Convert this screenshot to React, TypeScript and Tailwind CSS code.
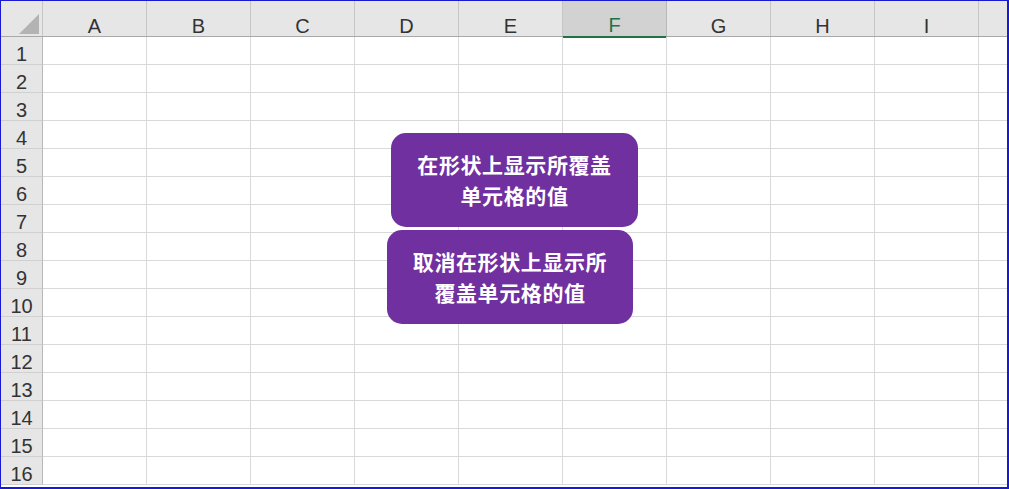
const columns = ["A", "B", "C", "D", "E", "F", "G", "H", "I", "J"];
const rows = Array.from({ length: 16 }, (_, i) => i + 1);

function Corner() {
  return (
    <div className="relative h-full w-[42px] shrink-0 border-r border-[#c6c6c6]">
      <svg className="absolute left-[18px] top-[13px]" width="20" height="20" viewBox="0 0 20 20">
        <polygon points="20,0 20,20 0,20" fill="#b3b3b3" />
      </svg>
    </div>
  );
}

function Shape({ className, lines }: { className: string; lines: string[] }) {
  return (
    <div
      className={`absolute flex flex-col items-center justify-center rounded-[15px] bg-[#7030a0] text-[21px] font-bold leading-[31px] tracking-[0.6px] text-white font-['Noto_Sans_CJK_SC',sans-serif] ${className}`}
    >
      {lines.map((line) => (
        <div key={line}>{line}</div>
      ))}
    </div>
  );
}

export default function App() {
  return (
    <div className="relative h-[489px] w-[1009px] overflow-hidden border-t border-l border-r-2 border-b-2 border-[#1a1ad0] bg-white font-['Liberation_Sans',sans-serif] text-[#333]">
      {/* column headers */}
      <div className="flex h-[36px] border-b border-[#a8a8a8] bg-[#e6e6e6]">
        <Corner />
        {columns.map((c) =>
          c === "F" ? (
            <div
              key={c}
              className="-mb-px flex h-[37px] w-[104px] shrink-0 items-end justify-center border-r border-b-2 border-r-[#b8b8b8] border-b-[#217346] bg-[#d2d2d2] pb-px text-[20px] leading-[20px] text-[#217346]"
            >
              {c}
            </div>
          ) : (
            <div
              key={c}
              className="flex h-full w-[104px] shrink-0 items-end justify-center border-r border-[#c6c6c6] text-[20px] leading-[20px]"
            >
              {/* J sits past the window edge, its letter is not visible */}
              {c === "J" ? "" : c}
            </div>
          )
        )}
      </div>

      {/* rows */}
      {rows.map((r) => (
        <div key={r} className="flex h-[28px]">
          <div className="flex w-[42px] shrink-0 items-end justify-center border-r border-b border-r-[#b8b8b8] border-b-[#d0d0d0] bg-[#e6e6e6] text-[20px] leading-[20px]">
            {r}
          </div>
          {columns.map((c) => (
            <div key={c} className="w-[104px] shrink-0 border-r border-b border-[#d9d9d9]" />
          ))}
        </div>
      ))}

      {/* shapes */}
      <Shape className="left-[390px] top-[132px] h-[94px] w-[247px]" lines={["在形状上显示所覆盖", "单元格的值"]} />
      <Shape className="left-[386px] top-[229px] h-[94px] w-[246px]" lines={["取消在形状上显示所", "覆盖单元格的值"]} />
    </div>
  );
}
